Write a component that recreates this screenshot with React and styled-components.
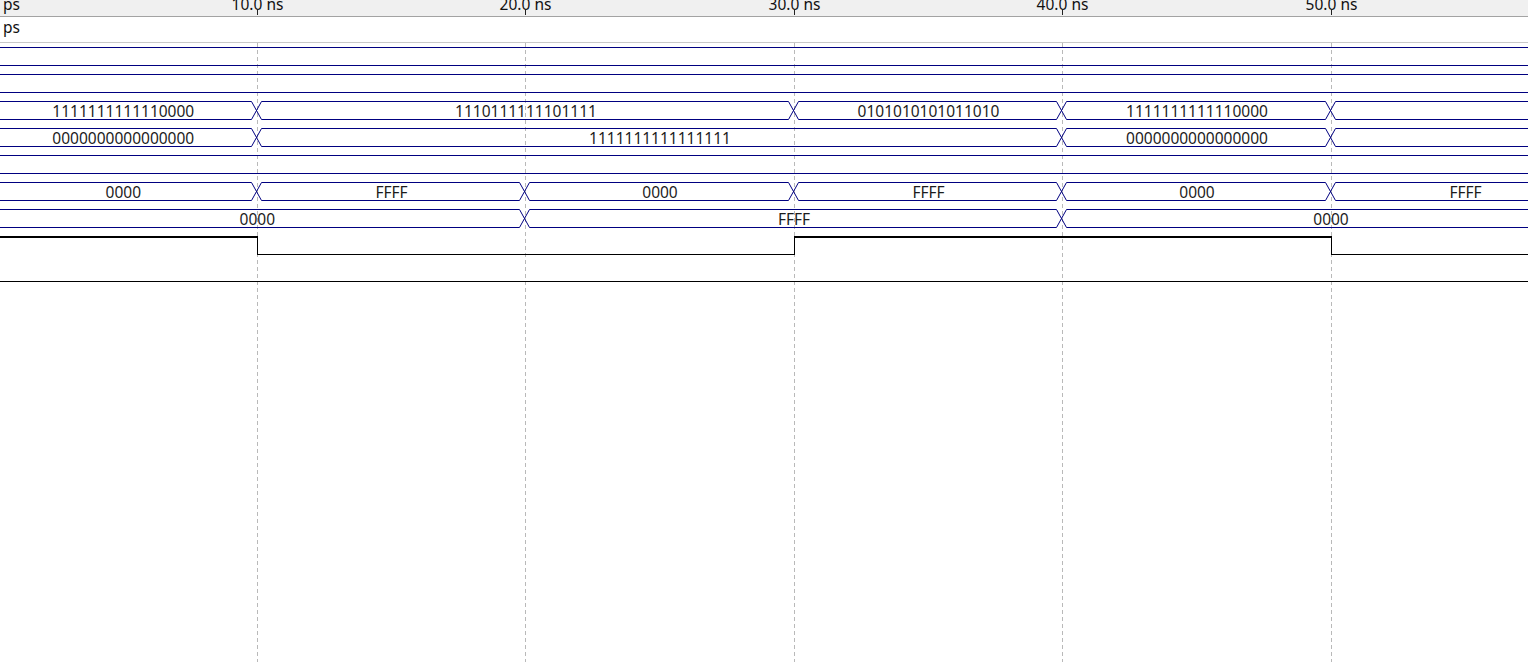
import React from "react";
import styled, { createGlobalStyle } from "styled-components";

const GlobalStyle = createGlobalStyle`
  html, body { margin: 0; padding: 0; background: #ffffff; }
  body { font-family: "Noto Sans", "Open Sans", sans-serif; overflow: hidden; }
`;

const VIEW_W = 1528;
const tx = (t) => Math.round(-11.4 + 26.84 * t);
const GRID = [10, 20, 30, 40, 50];

const Viewer = styled.div`
  width: ${VIEW_W}px;
  height: 662px;
  display: flex;
  flex-direction: column;
  overflow: hidden;
  background: #ffffff;
`;

const Ruler = styled.div`
  position: relative;
  height: 16px;
  flex: none;
  background: #f0f0f0;
  border-bottom: 1px solid #a3a3a3;
  overflow: hidden;
`;

const RulerUnit = styled.span`
  position: absolute;
  left: 3px;
  top: -6px;
  font-size: 15.5px;
  line-height: 20px;
  color: #111;
`;

const RulerLabel = styled.span`
  position: absolute;
  top: -6px;
  transform: translateX(-50%);
  font-size: 15.5px;
  line-height: 20px;
  color: #111;
  white-space: nowrap;
`;

const Tick = styled.span`
  position: absolute;
  top: 10px;
  width: 1px;
  height: 5px;
  background: #222;
`;

const CursorRow = styled.div`
  height: 25px;
  flex: none;
  display: flex;
  align-items: center;
  padding-left: 3px;
  border-bottom: 1px solid #c8c8c8;
  font-size: 15.5px;
  color: #111;
`;

const CursorText = styled.span`
  position: relative;
  top: -3px;
`;

const WaveArea = styled.div`
  position: relative;
  flex: 1;
  display: flex;
  flex-direction: column;
`;

const GridOverlay = styled.svg`
  position: absolute;
  inset: 0;
  width: 100%;
  height: 100%;
  pointer-events: none;
`;

const RowSvg = styled.svg`
  position: relative;
  display: block;
  width: ${VIEW_W}px;
  height: 27px;
  flex: none;
  overflow: visible;
`;

const ValueText = styled.text`
  font-family: "Noto Sans", "Open Sans", sans-serif;
  font-size: 15.5px;
  fill: #1c1c1c;
`;

const NAVY = "#000080";
const TOP = 4.5;
const BOT = 22.5;
const HW = 5;

function BusRow({ edges = [], values = [] }) {
  const xs = edges.map((t) => tx(t) - 0.5);
  const bounds = [-20, ...xs, VIEW_W + 20];
  let d = "";
  for (let i = 0; i < bounds.length - 1; i++) {
    const a = i === 0 ? bounds[i] : bounds[i] + HW;
    const b = i === bounds.length - 2 ? bounds[i + 1] : bounds[i + 1] - HW;
    d += `M${a} ${TOP}H${b}M${a} ${BOT}H${b}`;
  }
  xs.forEach((c) => {
    d += `M${c - HW} ${TOP}L${c + HW} ${BOT}M${c - HW} ${BOT}L${c + HW} ${TOP}`;
  });
  const tb = [-11.4, ...edges.map(tx), tx(60)];
  return (
    <RowSvg>
      <path d={d} stroke={NAVY} strokeWidth="1" fill="none" />
      {values.map((v, i) =>
        v ? (
          <ValueText key={i} x={(tb[i] + tb[i + 1]) / 2 + 0.5} y={19.5} textAnchor="middle">
            {v}
          </ValueText>
        ) : null
      )}
    </RowSvg>
  );
}

function BitRow({ levels, edges = [] }) {
  const bounds = [-20, ...edges.map((t) => tx(t) + 0.5), VIEW_W + 20];
  const parts = [];
  for (let i = 0; i < levels.length; i++) {
    const hi = levels[i] === 1;
    parts.push(
      <line
        key={`h${i}`}
        x1={bounds[i]}
        x2={bounds[i + 1]}
        y1={hi ? 5 : BOT}
        y2={hi ? 5 : BOT}
        stroke="#000"
        strokeWidth={hi ? 2 : 1}
      />
    );
    if (i > 0) {
      parts.push(
        <line key={`v${i}`} x1={bounds[i]} x2={bounds[i]} y1={4} y2={23} stroke="#000" strokeWidth="1" />
      );
    }
  }
  return <RowSvg>{parts}</RowSvg>;
}

const ROWS = [
  { kind: "bus" },
  { kind: "bus" },
  {
    kind: "bus",
    edges: [10, 30, 40, 50],
    values: ["1111111111110000", "1110111111101111", "0101010101011010", "1111111111110000", null],
  },
  {
    kind: "bus",
    edges: [10, 40, 50],
    values: ["0000000000000000", "1111111111111111", "0000000000000000", null],
  },
  { kind: "bus" },
  {
    kind: "bus",
    edges: [10, 20, 30, 40, 50],
    values: ["0000", "FFFF", "0000", "FFFF", "0000", "FFFF"],
  },
  { kind: "bus", edges: [20, 40], values: ["0000", "FFFF", "0000"] },
  { kind: "bit", edges: [10, 30, 50], levels: [1, 0, 1, 0] },
  { kind: "bit", edges: [], levels: [0] },
];

export default function App() {
  return (
    <>
      <GlobalStyle />
      <Viewer>
        <Ruler>
          <RulerUnit>ps</RulerUnit>
          {GRID.map((t) => (
            <React.Fragment key={t}>
              <RulerLabel style={{ left: tx(t) + 0.5 }}>{`${t}.0 ns`}</RulerLabel>
              <Tick style={{ left: tx(t) }} />
            </React.Fragment>
          ))}
        </Ruler>
        <CursorRow>
          <CursorText>ps</CursorText>
        </CursorRow>
        <WaveArea>
          <GridOverlay>
            {GRID.map((t) => (
              <line
                key={t}
                x1={tx(t) + 0.5}
                x2={tx(t) + 0.5}
                y1={0}
                y2={700}
                stroke="#b9b9b9"
                strokeWidth="1"
                strokeDasharray="4 3"
              />
            ))}
          </GridOverlay>
          {ROWS.map((r, i) =>
            r.kind === "bus" ? (
              <BusRow key={i} edges={r.edges} values={r.values} />
            ) : (
              <BitRow key={i} edges={r.edges} levels={r.levels} />
            )
          )}
        </WaveArea>
      </Viewer>
    </>
  );
}
